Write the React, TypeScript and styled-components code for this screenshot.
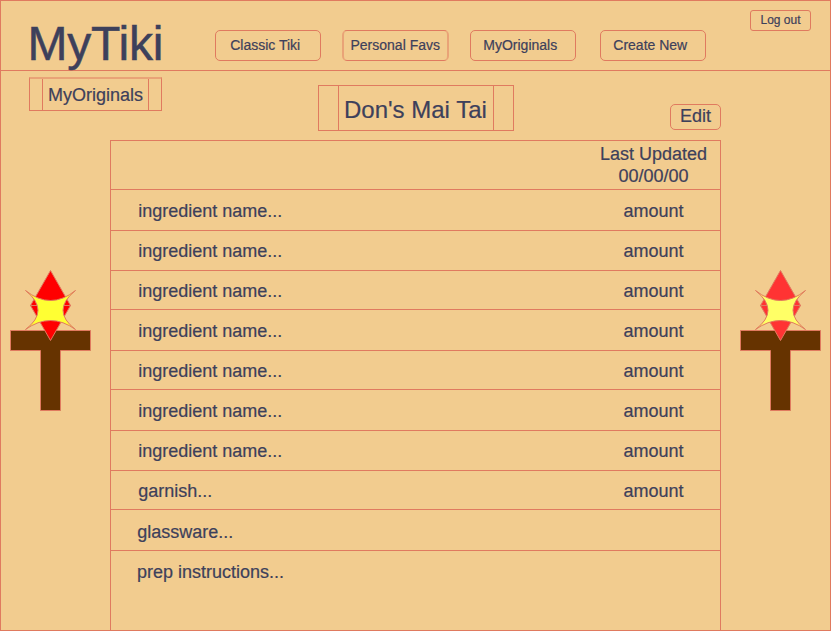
import React from "react";
import styled, { createGlobalStyle } from "styled-components";

const sand = "#f2cc8f";
const coral = "#e07a5f";
const paleCoral = "#e9a377";
const ink = "#3d405b";

const GlobalStyle = createGlobalStyle`
  *, *::before, *::after { box-sizing: border-box; }
  body {
    margin: 0;
    background: ${sand};
    color: ${ink};
    font-family: "Liberation Sans", Arial, sans-serif;
    -webkit-text-stroke: 0.2px ${ink};
  }
`;

const Page = styled.div`
  display: flex;
  flex-direction: column;
  width: 831px;
  height: 631px;
  border: 1px solid ${coral};
  overflow: hidden;
`;

const Header = styled.header`
  display: flex;
  align-items: flex-start;
  flex: none;
  height: 70px;
  padding-left: 26px;
  border-bottom: 1px solid ${coral};
`;

const Logo = styled.h1`
  margin: 0;
  width: 188px;
  padding: 16px 0 0 0.5px;
  font-size: 48px;
  font-weight: 400;
  line-height: 54px;
  letter-spacing: -0.2px;
  white-space: nowrap;
  -webkit-text-stroke: 0.5px ${ink};
`;

const Nav = styled.nav`
  display: grid;
  grid-template-columns: 127px 128px 130px 106px;
  padding-top: 29px;
`;

const Button = styled.button`
  margin: 0;
  padding: 0;
  border: 1px solid ${coral};
  border-radius: 5px;
  background: transparent;
  color: inherit;
  font-family: inherit;
  white-space: nowrap;
  text-align: left;
`;

const NavButton = styled(Button)<{ $inset: number; $softSides?: boolean }>`
  width: ${(p) => (p.$softSides ? 107 : 106)}px;
  height: 31px;
  padding: 0 0 2px ${(p) => p.$inset}px;
  border-width: ${(p) => (p.$softSides ? "1px 2px" : "1px")};
  border-color: ${(p) => (p.$softSides ? `${coral} ${paleCoral}` : coral)};
  font-size: 14px;
  line-height: 16px;
`;

const LogoutButton = styled(Button)`
  width: 61px;
  height: 21px;
  margin: 9px 19px 0 auto;
  padding: 0 0 2px 9.5px;
  border-radius: 3px;
  font-size: 12px;
  line-height: 14px;
`;

const Body = styled.div`
  display: grid;
  grid-template-columns: 109px 611px 109px;
  grid-template-rows: 69px 1fr;
  flex: 1;
  min-height: 0;
`;

const TitleBar = styled.div`
  grid-column: 1 / -1;
  display: flex;
  align-items: flex-start;
`;

const Plaque = styled.div`
  display: grid;
  grid-template-rows: 100%;
  border: 1px solid ${coral};
  white-space: nowrap;
`;

const Crumb = styled(Plaque)`
  grid-template-columns: 12px 107px 12px;
  width: 133px;
  height: 34px;
  margin: 6px 0 0 28px;
  border-top: 2px solid ${paleCoral};
  font-size: 18px;
  line-height: 31px;
`;

const Title = styled(Plaque)`
  grid-template-columns: 19px 156px 19px;
  width: 196px;
  height: 46px;
  margin: 14px 0 0 156px;
  font-size: 24px;
  line-height: 46px;
`;

const PlaqueText = styled.span<{ $inset: number }>`
  grid-column: 2;
  padding: 1px 0 0 ${(p) => p.$inset}px;
  border: solid ${coral};
  border-width: 0 1px;
`;

const EditButton = styled(Button)`
  width: 51px;
  height: 26px;
  margin: 33px 0 0 156px;
  padding: 0 0 2px 9px;
  font-size: 18px;
  line-height: 20px;
`;

const Side = styled.aside<{ $inset: number }>`
  padding: 128px 0 0 ${(p) => p.$inset}px;
`;

const Sheet = styled.main`
  display: flex;
  flex-direction: column;
  border: solid ${coral};
  border-width: 1px 1px 0;
  font-size: 18px;
`;

const SheetHead = styled.div`
  display: flex;
  justify-content: flex-end;
  height: 49px;
  padding: 2px 13px 0 0;
  border-bottom: 1px solid ${coral};
  line-height: 22px;
  text-align: center;
`;

const Row = styled.div<{ $height: number; $drop: number; $inset: number }>`
  display: grid;
  grid-template-columns: 1fr 133px;
  flex: none;
  height: ${(p) => p.$height}px;
  padding: ${(p) => p.$drop}px 0 0 ${(p) => p.$inset}px;
  border-bottom: 1px solid ${coral};
  line-height: 20px;

  &:last-child { border-bottom: 0; }
`;

const Amount = styled.span`
  text-align: center;
`;

const TorchArt = styled.svg`
  display: block;
`;

const navItems = [
  { label: "Classic Tiki", inset: 14.2 },
  { label: "Personal Favs", inset: 6.5, softSides: true },
  { label: "MyOriginals", inset: 12.3 },
  { label: "Create New", inset: 12.3 },
];

const rows = [
  { name: "ingredient name...", amount: "amount", height: 41, drop: 11, inset: 27.2 },
  { name: "ingredient name...", amount: "amount", height: 40, drop: 10, inset: 27.2 },
  { name: "ingredient name...", amount: "amount", height: 39, drop: 10, inset: 27.2 },
  { name: "ingredient name...", amount: "amount", height: 41, drop: 11, inset: 27.2 },
  { name: "ingredient name...", amount: "amount", height: 39, drop: 10, inset: 27.2 },
  { name: "ingredient name...", amount: "amount", height: 41, drop: 11, inset: 27.2 },
  { name: "ingredient name...", amount: "amount", height: 40, drop: 10, inset: 27.2 },
  { name: "garnish...", amount: "amount", height: 39, drop: 10, inset: 27.2 },
  { name: "glassware...", amount: "", height: 41, drop: 12, inset: 26.2 },
  { name: "prep instructions...", amount: "", height: 79, drop: 11, inset: 26 },
];

function Torch({ flame, spark }: { flame: string; spark: string }) {
  return (
    <TorchArt width="84" height="144" viewBox="9 268 84 144" stroke={coral}>
      <path d="M10.5 330.5H90.5V350.5H60.5V410.5H40.5V350.5H10.5Z" fill="#663300" />
      <path d="M50.5 270.5L70.5 305.5H30.5Z" fill={flame} />
      <path d="M30.5 305.5H70.5L50.5 340.5Z" fill={flame} />
      <path
        d="M25.5 290.5Q50.5 310.5 75.5 290.5Q50.5 310.5 75.5 329.5Q50.5 311.5 25.5 329.5Q50.5 310.5 25.5 290.5Z"
        fill={spark}
      />
    </TorchArt>
  );
}

export default function App() {
  return (
    <>
      <GlobalStyle />
      <Page>
        <Header>
          <Logo>MyTiki</Logo>
          <Nav>
            {navItems.map((n) => (
              <NavButton key={n.label} $inset={n.inset} $softSides={n.softSides}>
                {n.label}
              </NavButton>
            ))}
          </Nav>
          <LogoutButton>Log out</LogoutButton>
        </Header>
        <Body>
          <TitleBar>
            <Crumb><PlaqueText $inset={5}>MyOriginals</PlaqueText></Crumb>
            <Title><PlaqueText $inset={5}>Don's Mai Tai</PlaqueText></Title>
            <EditButton>Edit</EditButton>
          </TitleBar>
          <Side $inset={8}><Torch flame="#ff0000" spark="#ffff33" /></Side>
          <Sheet>
            <SheetHead>
              <div>Last Updated<br />00/00/00</div>
            </SheetHead>
            {rows.map((r, i) => (
              <Row key={i} $height={r.height} $drop={r.drop} $inset={r.inset}>
                <span>{r.name}</span>
                <Amount>{r.amount}</Amount>
              </Row>
            ))}
          </Sheet>
          <Side $inset={18}><Torch flame="#ff3333" spark="#ffff66" /></Side>
        </Body>
      </Page>
    </>
  );
}
